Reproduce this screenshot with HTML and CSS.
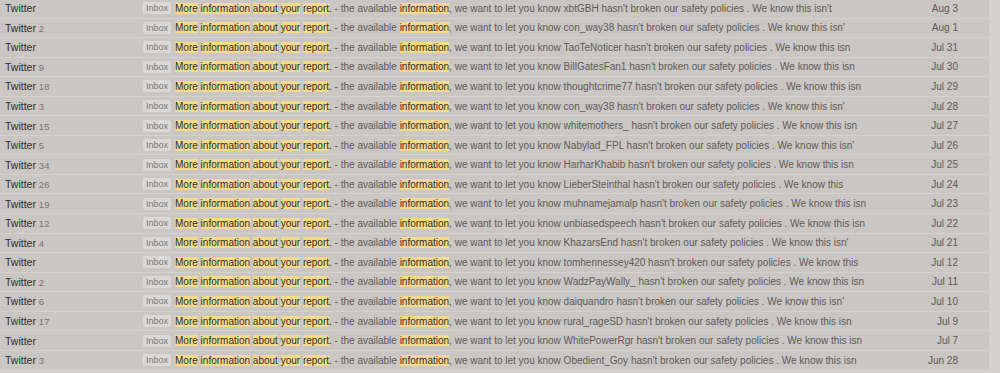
FILE: index.html
```html
<!DOCTYPE html>
<html lang="en">
  <head>
    <meta charset="UTF-8" />
    <title>Inbox search</title>
    <link rel="stylesheet" href="styles.css">
  </head>
  <body>
    <div class="mail-list" id="mailList">
      <!-- Rows are populated here -->
    </div>

    <script>
      // sender count, reported user, how far the snippet gets, date
      const rows = [
        ["", "xbtGBH", "this isn't", "Aug 3"],
        ["2", "con_way38", "this isn'", "Aug 1"],
        ["", "TaoTeNoticer", "this isn", "Jul 31"],
        ["9", "BillGatesFan1", "this isn", "Jul 30"],
        ["18", "thoughtcrime77", "this isn", "Jul 29"],
        ["3", "con_way38", "this isn'", "Jul 28"],
        ["15", "whitemothers_", "this isn", "Jul 27"],
        ["5", "Nabylad_FPL", "this isn'", "Jul 26"],
        ["34", "HarharKhabib", "this isn", "Jul 25"],
        ["26", "LieberSteinthal", "this", "Jul 24"],
        ["19", "muhnamejamalp", "this isn", "Jul 23"],
        ["12", "unbiasedspeech", "this isn", "Jul 22"],
        ["4", "KhazarsEnd", "this isn'", "Jul 21"],
        ["", "tomhennessey420", "this", "Jul 12"],
        ["2", "WadzPayWally_", "this isn", "Jul 11"],
        ["6", "daiquandro", "this isn'", "Jul 10"],
        ["17", "rural_rageSD", "this isn", "Jul 9"],
        ["", "WhitePowerRgr", "this isn", "Jul 7"],
        ["3", "Obedient_Goy", "this isn", "Jun 28"],
      ];

      const hl = (word) => `<mark>${word}</mark>`;
      const mailList = document.getElementById("mailList");

      rows.forEach(([count, user, tail, date]) => {
        const row = document.createElement("div");
        row.classList.add("mail-row");
        row.innerHTML = `
          <div class="sender">Twitter <span class="count">${count}</span></div>
          <span class="label">Inbox</span>
          <div class="snippet">
            <span class="subject">${hl("More")} ${hl("information")} ${hl("about")} ${hl("your")} ${hl("report")}.</span>
            - the available ${hl("information")}, we want to let you know ${user} hasn't broken our safety policies . We know ${tail}
          </div>
          <div class="date">${date}</div>`;
        mailList.appendChild(row);
      });
    </script>
  </body>
</html>
```

FILE: styles.css
```css
:root {
  --row-bg: #c9c6c4;
  --row-line: #d4d1cf;
  --page-bg: #d3d1cf;
  --text-dark: #2f2d2c;
  --text-mid: #5e5b59;
  --text-light: #7a7775;
  --label-bg: #dad8d6;
  --highlight: #f4da8c;
  --row-height: 19.55px;
}

html,
body {
  margin: 0;
  padding: 0;
}

body {
  background-color: var(--page-bg);
  font-family: "Liberation Sans", Arial, sans-serif;
  font-size: 10px;
  color: var(--text-mid);
  overflow: hidden;
}

.mail-list {
  width: 989px;
  margin-top: -1px;
  background-color: var(--row-bg);
}

.mail-row {
  display: flex;
  align-items: center;
  height: var(--row-height);
  box-sizing: border-box;
  border-bottom: 1px solid var(--row-line);
  white-space: nowrap;
}

.sender {
  width: 143px;
  padding-left: 5px;
  box-sizing: border-box;
  font-size: 10.5px;
  color: var(--text-dark);
}

.count {
  font-size: 9.5px;
  color: var(--text-light);
}

.label {
  background-color: var(--label-bg);
  color: var(--text-light);
  font-size: 9px;
  padding: 1px 3px;
  border-radius: 2px;
  margin-right: 4px;
}

.snippet {
  flex: 1;
  overflow: hidden;
}

.subject {
  color: var(--text-dark);
}

mark {
  background-color: var(--highlight);
  color: var(--text-dark);
  padding: 2px 0;
}

.date {
  width: 60px;
  padding-right: 31px;
  text-align: right;
  font-size: 10px;
  color: var(--text-mid);
}
```
